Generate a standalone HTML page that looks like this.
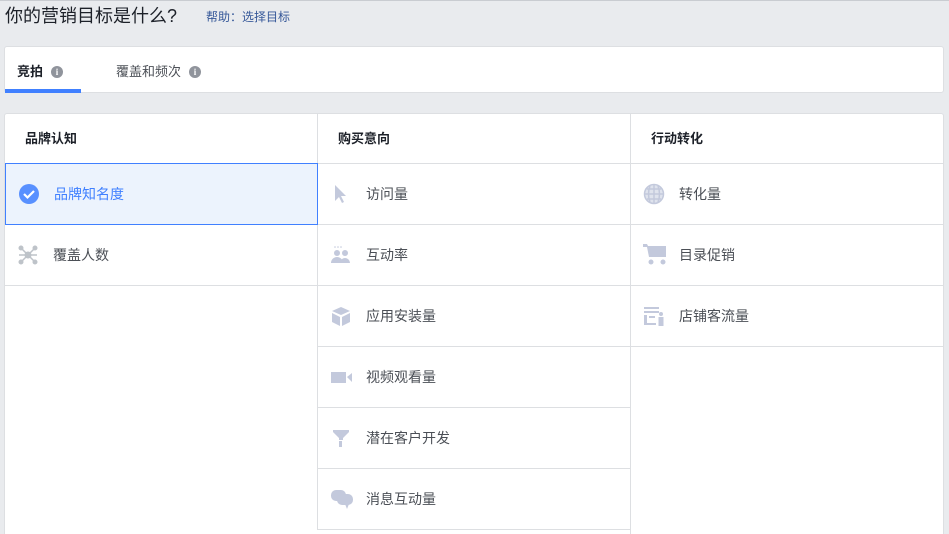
<!DOCTYPE html>
<html style="overflow:hidden;width:949px;height:534px"><head><meta charset="utf-8"><style>
*{margin:0;padding:0;box-sizing:border-box}
body{width:949px;height:534px;background:#e9ebee;font-family:"Liberation Sans","Noto Sans CJK SC",sans-serif;position:relative;overflow:hidden}
.top{position:absolute;left:0;top:0;width:949px;height:1px;background:#c9ccd1}
.title{position:absolute;left:5px;top:2px;font-size:18px;color:#1d2129}
.help{position:absolute;left:206px;top:8px;font-size:12px;color:#365899}
.tabs{position:absolute;left:4px;top:46px;width:940px;height:47px;background:#fff;border:1px solid #dddfe2;border-radius:3px}
.tab{position:absolute;top:14px;font-size:13px}
.info{display:inline-block;width:12px;height:12px;border-radius:50%;background:#90949c;color:#fff;font-size:9px;font-weight:bold;text-align:center;line-height:12px;margin-left:8px;vertical-align:1px;font-family:"Liberation Serif",serif}
.ul{position:absolute;left:0;top:42px;width:76px;height:4px;background:#4080ff}
.card{position:absolute;left:4px;top:113px;width:940px;height:421px;background:#fff;border:1px solid #dddfe2;border-bottom:none;border-radius:3px 3px 0 0;overflow:hidden}
.col{position:absolute;top:0}
.h{height:50px;line-height:50px;font-size:13px;font-weight:bold;color:#1d2129;padding-left:20px;border-bottom:1px solid #dddfe2}
.r{height:61px;border-bottom:1px solid #dddfe2;position:relative;font-size:14px;color:#4b4f56;line-height:60px;padding-left:48px}
.r svg{position:absolute;left:12px;top:19px}
.sel{background:#ecf3fd;border:1px solid #4080ff;color:#4080ff;margin-top:-1px;height:62px}
.vl{position:absolute;top:0;width:1px;background:#dddfe2}
</style></head><body>
<div class="top"></div>
<div class="title">你的营销目标是什么?</div>
<div class="help">帮助：选择目标</div>
<div class="tabs">
<div class="tab" style="left:12px;color:#1d2129;font-weight:bold">竞拍<span class="info">i</span></div>
<div class="tab" style="left:111px;color:#4b4f56">覆盖和频次<span class="info">i</span></div>
<div class="ul"></div>
</div>
<div class="card">
<div class="vl" style="left:312px;height:416px"></div>
<div class="vl" style="left:625px;height:430px"></div>
<div class="col" style="left:0;width:313px">
<div class="h">品牌认知</div>
<div class="r sel"><svg width="22" height="22"><circle cx="11" cy="11" r="10" fill="#5890ff"/><path d="M6 11l3.5 3.5L16 8" stroke="#fff" stroke-width="2.2" fill="none"/></svg>品牌知名度</div>
<div class="r"><svg width="22" height="22" fill="#bec3c9" stroke="#bec3c9"><path d="M11 11L4 4M11 11L18 4M11 11L4 18M11 11L18 18M11 11H2M11 11H20" stroke-width="1.5"/><circle cx="11" cy="11" r="3"/><circle cx="4" cy="4" r="2"/><circle cx="18" cy="4" r="2"/><circle cx="4" cy="18" r="2"/><circle cx="18" cy="18" r="2"/></svg>覆盖人数</div>
</div>
<div class="col" style="left:313px;width:313px">
<div class="h">购买意向</div>
<div class="r"><svg width="22" height="22"><path d="M5 2v16l4-4 3 6 2-1-3-6h5z" fill="#c3c9dc"/></svg>访问量</div>
<div class="r"><svg width="22" height="22" fill="#c3c9dc"><circle cx="7" cy="9" r="3"/><circle cx="15" cy="9" r="3"/><path d="M1 19a6 6 0 0 1 12 0zM10 19a5 5 0 0 1 10 0z"/><circle cx="5" cy="3" r=".8"/><circle cx="8" cy="3" r=".8"/><circle cx="11" cy="3" r=".8"/></svg>互动率</div>
<div class="r"><svg width="22" height="22" fill="#c3c9dc"><path d="M11 2l9 4-9 4-9-4z"/><path d="M2 8l8 4v9l-8-4zM20 8l-8 4v9l8-4z"/></svg>应用安装量</div>
<div class="r"><svg width="24" height="22" fill="#c3c9dc"><rect x="1" y="6" width="15" height="11"/><path d="M17 11l5-4v9z"/></svg>视频观看量</div>
<div class="r"><svg width="22" height="22" fill="#c3c9dc"><path d="M3 3h16v2L13 11v2H9v-2L3 5z"/><rect x="9" y="14" width="3" height="6"/></svg>潜在客户开发</div>
<div class="r"><svg width="24" height="22" fill="#c3c9dc"><rect x="1" y="2" width="15" height="11" rx="5"/><rect x="7" y="6" width="16" height="11" rx="5"/><path d="M15 16l2 5 2-5z"/></svg>消息互动量</div>
</div>
<div class="col" style="left:626px;width:313px">
<div class="h">行动转化</div>
<div class="r"><svg width="22" height="22" fill="none" stroke="#c3c9dc" stroke-width="1.5"><circle cx="11" cy="11" r="9.5" fill="#dfe3ed"/><path d="M2 11h18M11 2v18M7 3q-3 8 0 16M15 3q3 8 0 16M4 6h14M4 16h14"/></svg>转化量</div>
<div class="r"><svg width="24" height="22" fill="#c3c9dc"><path d="M0 0h4l1 2h18v11H6L4 3H0z"/><circle cx="8" cy="18" r="2.5"/><circle cx="20" cy="18" r="2.5"/></svg>目录促销</div>
<div class="r"><svg width="24" height="22" fill="#c3c9dc"><rect x="1" y="2" width="15" height="2"/><rect x="1" y="6" width="15" height="2"/><rect x="1" y="10" width="3" height="8"/><rect x="1" y="18" width="12" height="2"/><rect x="6" y="11" width="6" height="2"/><circle cx="18" cy="9" r="2"/><rect x="15.5" y="12" width="5" height="9"/></svg>店铺客流量</div>
</div>
</div>
</body></html>
